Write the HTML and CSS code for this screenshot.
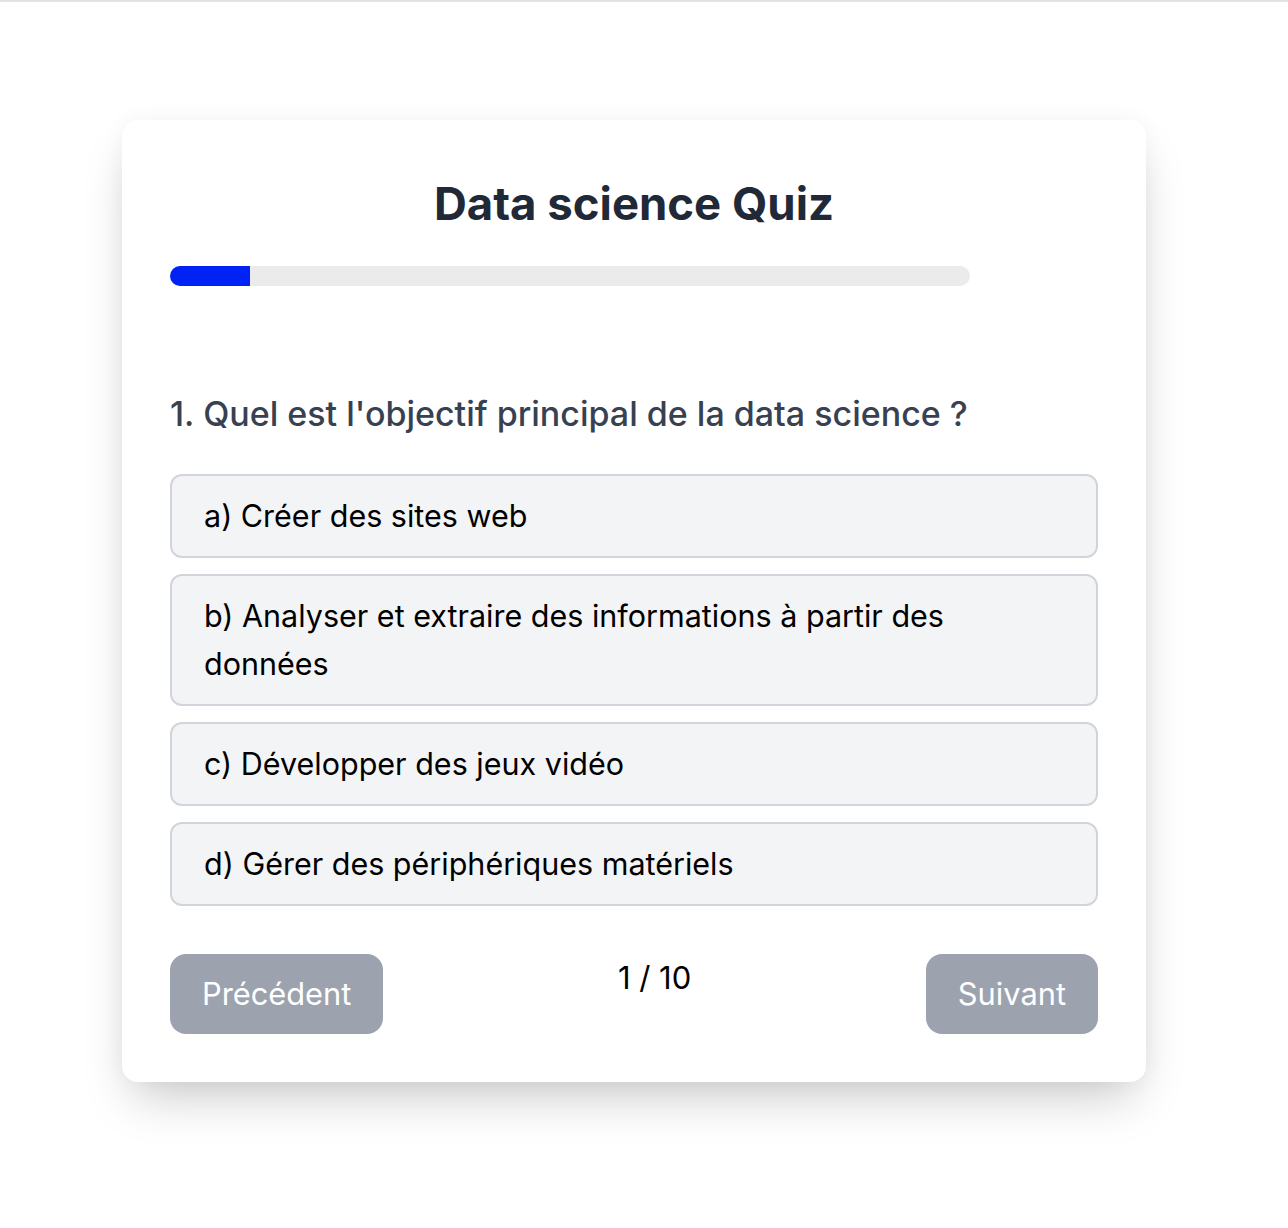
FILE: index.html
```html
<!DOCTYPE html>
<html lang="fr">
<head>
<meta charset="utf-8">
<title>Data science Quiz</title>
<link rel="stylesheet" href="styles.css">
</head>
<body>
<main class="page">
  <section class="card">
    <h1 class="title">Data science Quiz</h1>
    <div class="progress"><div class="progress-fill" style="width:10%"></div></div>
    <h2 class="question">1. Quel est l'objectif principal de la data science ?</h2>
    <div class="options">
      <button class="option">a) Créer des sites web</button>
      <button class="option">b) Analyser et extraire des informations à partir des données</button>
      <button class="option">c) Développer des jeux vidéo</button>
      <button class="option">d) Gérer des périphériques matériels</button>
    </div>
    <div class="nav">
      <button class="nav-btn">Précédent</button>
      <span class="counter">1 / 10</span>
      <button class="nav-btn">Suivant</button>
    </div>
  </section>
</main>
</body>
</html>
```
FILE: styles.css
```css
* { box-sizing: border-box; }
html, body { margin: 0; padding: 0; }
body {
  background: #ffffff;
  border-top: 2px solid #e2e2e2;
  font-family: Inter, "Liberation Sans", sans-serif;
  color: #000;
  min-height: 1226px;
}
.page {
  display: flex;
  justify-content: center;
  padding: 118px 20px 0 0;
}
.card {
  width: 1024px;
  background: #fff;
  border-radius: 16px;
  box-shadow: 0 25px 50px -12px rgba(0,0,0,0.22), 0 0 24px rgba(0,0,0,0.04);
  padding: 48px;
}
.title {
  margin: 0 0 26px;
  text-align: center;
  font-size: 45.5px;
  line-height: 72px;
  font-weight: 700;
  color: #1f2937;
}
.progress {
  width: 800px;
  height: 20px;
  background: #ebebeb;
  border-radius: 10px;
  overflow: hidden;
}
.progress-fill {
  height: 100%;
  background: #0022f5;
}
.question {
  margin: 104px 0 36px;
  font-size: 34px;
  line-height: 48px;
  font-weight: 500;
  color: #374151;
}
.options {
  display: flex;
  flex-direction: column;
  gap: 16px;
}
.option {
  display: block;
  width: 100%;
  text-align: left;
  font-family: inherit;
  font-size: 30.5px;
  line-height: 48px;
  color: #000;
  background: #f3f4f6;
  border: 2px solid #d1d5db;
  border-radius: 12px;
  padding: 16px 32px;
}
.nav {
  margin-top: 48px;
  display: flex;
  justify-content: space-between;
  align-items: flex-start;
}
.nav-btn {
  font-family: inherit;
  font-size: 30.8px;
  line-height: 48px;
  color: #fff;
  background: #9ca3af;
  border: none;
  border-radius: 16px;
  padding: 16px 32px;
}
.counter {
  font-size: 31px;
  line-height: 48px;
}
```
